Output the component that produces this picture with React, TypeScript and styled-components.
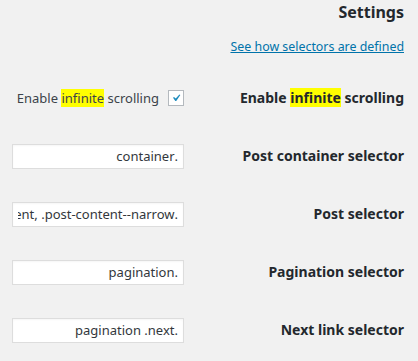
import styled, { createGlobalStyle } from "styled-components";

const GlobalStyle = createGlobalStyle`
  html, body {
    margin: 0;
    padding: 0;
    background: #f1f1f1;
  }
  body {
    font-family: "Noto Sans", "Open Sans", sans-serif;
    color: #23282d;
  }
`;

type Field = {
  label: string;
  value: string;
};

const fields: Field[] = [
  { label: "Post container selector", value: ".container" },
  { label: "Post selector", value: ".post-content, .post-content--narrow" },
  { label: "Pagination selector", value: ".pagination" },
  { label: "Next link selector", value: ".pagination .next" },
];

const Mark = ({ children }: { children: string }) => <Hl>{children}</Hl>;

const App = () => {
  return (
    <>
      <GlobalStyle />
      <Page dir="rtl">
        <Title>Settings</Title>
        <LinkLine>
          <HelpLink href="#">See how selectors are defined</HelpLink>
        </LinkLine>
        <FormTable>
          <Row>
            <Label>
              Enable <Mark>infinite</Mark> scrolling
            </Label>
            <Cell>
              <CheckLabel>
                <CheckBox>
                  <svg width="18" height="18" viewBox="0 0 20 20">
                    <path
                      d="M14.83 4.89l1.34.94-5.81 8.38H9.02L5.78 9.67l1.34-1.25 2.57 2.4z"
                      fill="#1e8cbe"
                    />
                  </svg>
                </CheckBox>
                <span>
                  Enable <Mark>infinite</Mark> scrolling
                </span>
              </CheckLabel>
            </Cell>
          </Row>
          {fields.map((f) => (
            <Row key={f.label}>
              <Label>{f.label}</Label>
              <Cell>
                <TextInput type="text" defaultValue={f.value} dir="rtl" />
              </Cell>
            </Row>
          ))}
        </FormTable>
      </Page>
    </>
  );
};

export default App;

const Page = styled.div`
  direction: rtl;
  padding: 0 14px 0 12px;
`;

const Title = styled.h2`
  margin: 0;
  padding-top: 1px;
  font-size: 16px;
  line-height: 22px;
  font-weight: 700;
  color: #23282d;
  text-align: right;
`;

const LinkLine = styled.div`
  margin-top: 14px;
  display: flex;
  justify-content: flex-start;
  font-size: 12.4px;
  line-height: 20px;
`;

const HelpLink = styled.a`
  direction: ltr;
  color: #0073aa;
  text-decoration: underline;
`;

const FormTable = styled.div`
  margin-top: 12px;
  display: flex;
  flex-direction: column;
`;

const Row = styled.div`
  display: grid;
  grid-template-columns: 210px 1fr;
  align-items: center;
  height: 58px;
`;

const Label = styled.div`
  font-size: 14px;
  font-weight: 700;
  line-height: 20px;
  color: #23282d;
  white-space: nowrap;
`;

const Cell = styled.div`
  padding-right: 10px;
  display: flex;
`;

const Hl = styled.span`
  background: #ffff00;
`;

const CheckLabel = styled.label`
  display: flex;
  align-items: center;
  gap: 9px;
  font-size: 13px;
  line-height: 20px;
  color: #3c434a;
  white-space: nowrap;
`;

const CheckBox = styled.span`
  width: 14px;
  height: 14px;
  border: 1px solid #b4b9be;
  background: #fff;
  display: flex;
  align-items: center;
  justify-content: center;
`;

const TextInput = styled.input`
  box-sizing: border-box;
  width: 172px;
  height: 25px;
  padding: 0 5px;
  border: 1px solid #ddd;
  background: #fff;
  font-family: "Noto Sans", "Open Sans", sans-serif;
  font-size: 13px;
  color: #32373c;
  text-align: right;
  outline: none;
  box-shadow: inset 0 1px 2px rgba(0, 0, 0, 0.04);
`;
